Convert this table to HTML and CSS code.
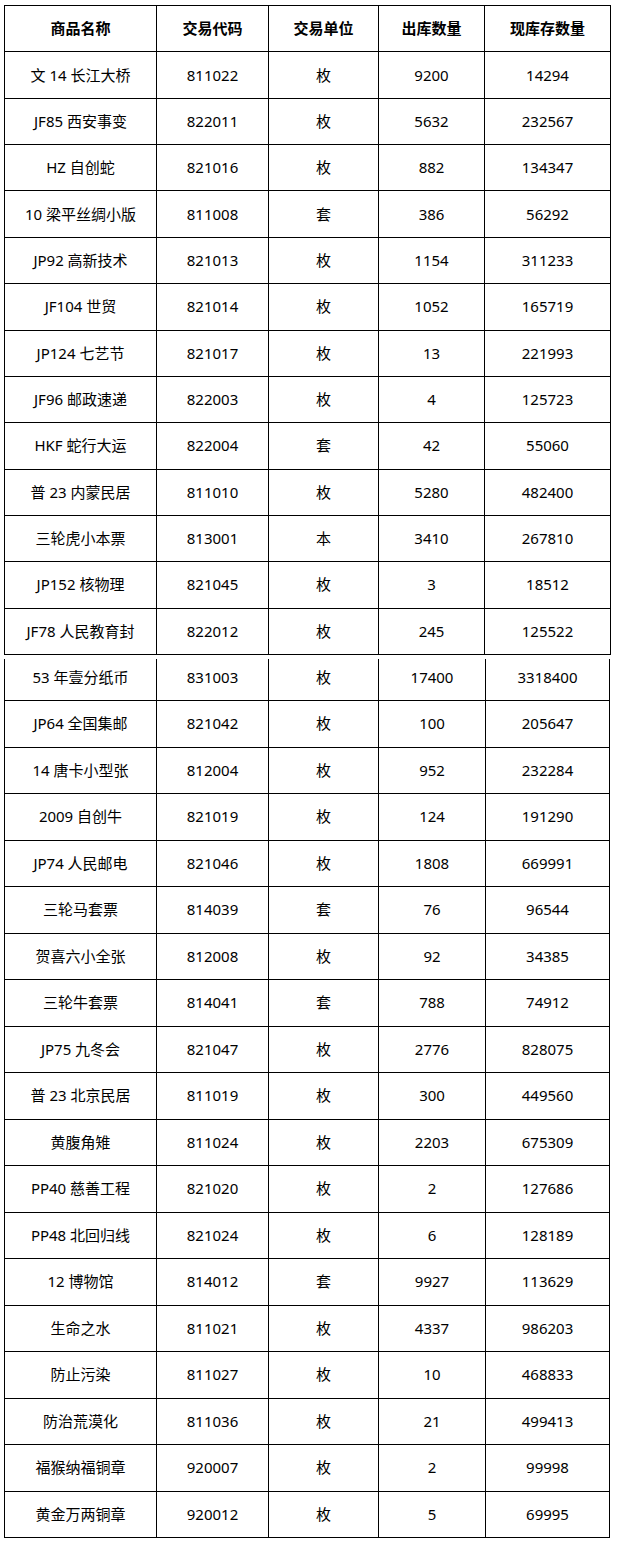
FILE: index.html
```html
<!DOCTYPE html>
<html lang="zh-CN">
<head>
<meta charset="utf-8">
<title>库存表</title>
<link rel="stylesheet" href="styles.css">
</head>
<body>
<div class="sheet sheet-a">
  <div class="cell head">商品名称</div><div class="cell head">交易代码</div><div class="cell head">交易单位</div><div class="cell head">出库数量</div><div class="cell head">现库存数量</div>
  <div class="cell">文 14 长江大桥</div><div class="cell">811022</div><div class="cell">枚</div><div class="cell">9200</div><div class="cell">14294</div>
  <div class="cell">JF85 西安事变</div><div class="cell">822011</div><div class="cell">枚</div><div class="cell">5632</div><div class="cell">232567</div>
  <div class="cell">HZ 自创蛇</div><div class="cell">821016</div><div class="cell">枚</div><div class="cell">882</div><div class="cell">134347</div>
  <div class="cell">10 梁平丝绸小版</div><div class="cell">811008</div><div class="cell">套</div><div class="cell">386</div><div class="cell">56292</div>
  <div class="cell">JP92 高新技术</div><div class="cell">821013</div><div class="cell">枚</div><div class="cell">1154</div><div class="cell">311233</div>
  <div class="cell">JF104 世贸</div><div class="cell">821014</div><div class="cell">枚</div><div class="cell">1052</div><div class="cell">165719</div>
  <div class="cell">JP124 七艺节</div><div class="cell">821017</div><div class="cell">枚</div><div class="cell">13</div><div class="cell">221993</div>
  <div class="cell">JF96 邮政速递</div><div class="cell">822003</div><div class="cell">枚</div><div class="cell">4</div><div class="cell">125723</div>
  <div class="cell">HKF 蛇行大运</div><div class="cell">822004</div><div class="cell">套</div><div class="cell">42</div><div class="cell">55060</div>
  <div class="cell">普 23 内蒙民居</div><div class="cell">811010</div><div class="cell">枚</div><div class="cell">5280</div><div class="cell">482400</div>
  <div class="cell">三轮虎小本票</div><div class="cell">813001</div><div class="cell">本</div><div class="cell">3410</div><div class="cell">267810</div>
  <div class="cell">JP152 核物理</div><div class="cell">821045</div><div class="cell">枚</div><div class="cell">3</div><div class="cell">18512</div>
  <div class="cell">JF78 人民教育封</div><div class="cell">822012</div><div class="cell">枚</div><div class="cell">245</div><div class="cell">125522</div>
</div>
<div class="sheet sheet-b">
  <div class="cell first">53 年壹分纸币</div><div class="cell first">831003</div><div class="cell first">枚</div><div class="cell first">17400</div><div class="cell first">3318400</div>
  <div class="cell">JP64 全国集邮</div><div class="cell">821042</div><div class="cell">枚</div><div class="cell">100</div><div class="cell">205647</div>
  <div class="cell">14 唐卡小型张</div><div class="cell">812004</div><div class="cell">枚</div><div class="cell">952</div><div class="cell">232284</div>
  <div class="cell">2009 自创牛</div><div class="cell">821019</div><div class="cell">枚</div><div class="cell">124</div><div class="cell">191290</div>
  <div class="cell">JP74 人民邮电</div><div class="cell">821046</div><div class="cell">枚</div><div class="cell">1808</div><div class="cell">669991</div>
  <div class="cell">三轮马套票</div><div class="cell">814039</div><div class="cell">套</div><div class="cell">76</div><div class="cell">96544</div>
  <div class="cell">贺喜六小全张</div><div class="cell">812008</div><div class="cell">枚</div><div class="cell">92</div><div class="cell">34385</div>
  <div class="cell">三轮牛套票</div><div class="cell">814041</div><div class="cell">套</div><div class="cell">788</div><div class="cell">74912</div>
  <div class="cell">JP75 九冬会</div><div class="cell">821047</div><div class="cell">枚</div><div class="cell">2776</div><div class="cell">828075</div>
  <div class="cell">普 23 北京民居</div><div class="cell">811019</div><div class="cell">枚</div><div class="cell">300</div><div class="cell">449560</div>
  <div class="cell">黄腹角雉</div><div class="cell">811024</div><div class="cell">枚</div><div class="cell">2203</div><div class="cell">675309</div>
  <div class="cell">PP40 慈善工程</div><div class="cell">821020</div><div class="cell">枚</div><div class="cell">2</div><div class="cell">127686</div>
  <div class="cell">PP48 北回归线</div><div class="cell">821024</div><div class="cell">枚</div><div class="cell">6</div><div class="cell">128189</div>
  <div class="cell">12 博物馆</div><div class="cell">814012</div><div class="cell">套</div><div class="cell">9927</div><div class="cell">113629</div>
  <div class="cell">生命之水</div><div class="cell">811021</div><div class="cell">枚</div><div class="cell">4337</div><div class="cell">986203</div>
  <div class="cell">防止污染</div><div class="cell">811027</div><div class="cell">枚</div><div class="cell">10</div><div class="cell">468833</div>
  <div class="cell">防治荒漠化</div><div class="cell">811036</div><div class="cell">枚</div><div class="cell">21</div><div class="cell">499413</div>
  <div class="cell">福猴纳福铜章</div><div class="cell">920007</div><div class="cell">枚</div><div class="cell">2</div><div class="cell">99998</div>
  <div class="cell">黄金万两铜章</div><div class="cell">920012</div><div class="cell">枚</div><div class="cell">5</div><div class="cell">69995</div>
</div>
</body>
</html>
```
FILE: styles.css
```css
html, body {
  margin: 0;
  padding: 0;
  background: #fff;
}
body {
  font-family: "Noto Sans", "Noto Sans CJK SC", sans-serif;
  font-size: 15px;
  color: #000;
}
.sheet {
  display: grid;
  width: max-content;
  margin-left: 4px;
  border-left: 1px solid #000;
}
.sheet-a {
  margin-top: 5px;
  border-top: 1px solid #000;
  grid-template-columns: 152px 112px 110px 106px 126px;
  grid-auto-rows: 46.36px;
}
.sheet-b {
  margin-top: 4px;
  grid-template-columns: 152px 112px 110px 107px 124px;
  grid-template-rows: 42px;
  grid-auto-rows: 46.5px;
}
.cell {
  box-sizing: border-box;
  border-right: 1px solid #000;
  border-bottom: 1px solid #000;
  display: flex;
  align-items: center;
  justify-content: center;
  white-space: nowrap;
  line-height: 1;
}
.head {
  font-weight: 700;
}
.first {
  padding-bottom: 5px;
}
```
